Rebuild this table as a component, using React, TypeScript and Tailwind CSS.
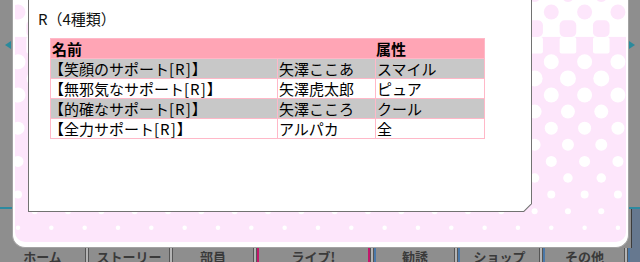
const PINK = "#fde6fb";

const rows = [
  { name: "【笑顔のサポート", chara: "矢澤ここあ", attr: "スマイル", gray: true },
  { name: "【無邪気なサポート", chara: "矢澤虎太郎", attr: "ピュア", gray: false },
  { name: "【的確なサポート", chara: "矢澤こころ", attr: "クール", gray: true },
  { name: "【全力サポート", chara: "アルパカ", attr: "全", gray: false },
];

const tabs = [
  { label: "ホーム", w: "w-[85px]" },
  { label: "ストーリー", w: "w-[80px]" },
  { label: "部員", w: "w-[80px]" },
  { label: "ライブ!", w: "w-[111px]", live: true },
  { label: "勧誘", w: "w-[78px]" },
  { label: "ショップ", w: "w-[79px]" },
  { label: "その他", w: "w-[79px]" },
];

// halftone dots behind the panel (coords are page pixels, see viewBox)
const DotPattern = () => {
  const row = (k: number) => 12 + 16.6 * k;
  const cols = (onA: boolean) =>
    Array.from({ length: 20 }, (_, n) => (onA ? 18 : 1.33) + n * 33.33);
  const whiteSize: Record<number, number> = {
    3: 15, 4: 16, 5: 15, 6: 14, 7: 13, 8: 12, 9: 11, 10: 9.5, 11: 8, 12: 6, 13: 4.5,
  };

  return (
    <svg
      className="absolute inset-0"
      width={611}
      height={242}
      viewBox="15 0 611 242"
    >
      <rect x={0} y={0} width={640} height={242} fill="#ffffff" />
      {cols(false).map((x) => (
        <circle key={`a${x}`} cx={x} cy={row(-1)} r={6.5} fill={PINK} />
      ))}
      {cols(true).map((x) => (
        <circle key={`b${x}`} cx={x} cy={row(0)} r={7.5} fill={PINK} />
      ))}
      {cols(false).map((x) => (
        <rect key={`c${x}`} x={x - 8.3} y={row(1) - 8.3} width={16.6} height={16.6} rx={5} fill={PINK} />
      ))}
      <rect x={0} y={row(1.5)} width={640} height={242} fill={PINK} />
      {cols(false).map((x) => (
        <rect key={`d${x}`} x={x - 8.3} y={row(1.5)} width={16.6} height={16.6} rx={2} fill="#ffffff" />
      ))}
      {Object.entries(whiteSize).map(([ks, d]) => {
        const k = Number(ks);
        return cols(k % 2 === 1).map((x) => (
          <circle key={`w${k}-${x}`} cx={x} cy={row(k)} r={d / 2} fill="#ffffff" />
        ));
      })}
    </svg>
  );
};

const Arrow = ({ dir }: { dir: "left" | "right" }) => (
  <svg width="6" height="8" viewBox="0 0 6 8">
    {dir === "left" ? (
      <polygon points="6,0 0,4 6,8" fill="#2a8a9c" />
    ) : (
      <polygon points="0,0 6,4 0,8" fill="#2a8a9c" />
    )}
  </svg>
);

const Separator = ({ accent }: { accent?: "left" | "right" | "blue" }) => (
  <div className="flex h-full">
    <div className="w-px bg-[#555]" />
    <div className="w-[2px] bg-[#b4b4b4]" />
    <div className="w-px bg-[#555]" />
    {accent === "left" && <div className="w-[2px] bg-[#c2186b]" />}
    {accent === "right" && <div className="w-[2px] bg-[#999]" />}
    {accent === "blue" && <div className="w-[2px] bg-[#4a78a8]" />}
  </div>
);

const App = () => {
  return (
    <div
      className="w-[640px] h-[262px] overflow-hidden bg-[#8e8e8e] flex flex-col"
      style={{ fontFamily: '"Noto Sans CJK JP", "Noto Sans", sans-serif' }}
    >
      <div className="flex h-[248px] shrink-0">
        {/* left side strip */}
        <div className="w-[12px] flex flex-col">
          <div className="h-[41px]" />
          <div className="pl-[5px]">
            <Arrow dir="left" />
          </div>
          <div className="flex-1" />
          <div className="h-[2px] bg-[#2d8aa0] mb-[39px]" />
        </div>

        {/* pink frame */}
        <div className="w-[617px] border-x border-b border-[#a3a3a3] rounded-b-[13px] bg-white px-[2px] pb-[5px]">
          <div className="relative h-full rounded-b-[10px] overflow-hidden">
            <DotPattern />
            <div className="relative ml-[13px] w-[504px] h-[212px] bg-[#727272] px-px pb-px [clip-path:polygon(0_0,100%_0,100%_calc(100%_-_8px),calc(100%_-_8px)_100%,0_100%)]">
              <div className="h-full bg-white pl-[9px] pt-[10px] [clip-path:polygon(0_0,100%_0,100%_calc(100%_-_7.5px),calc(100%_-_7.5px)_100%,0_100%)]">
                <div className="text-[15px] leading-[18px] text-[#111]">R（4種類）</div>

                <div className="ml-[12px] mt-[10px] w-[435px] border border-[#ffb8c8] text-[15px] leading-[19px] text-black">
                  <div className="grid grid-cols-[226px_98px_1fr] h-[19px] bg-[#ffa5b5] font-bold">
                    <div className="pl-px">名前</div>
                    <div />
                    <div className="pl-px">属性</div>
                  </div>
                  {rows.map((r) => (
                    <div
                      key={r.name}
                      className={`grid grid-cols-[226px_98px_1fr] h-[20px] border-t border-[#ffb8c8] ${
                        r.gray ? "bg-[#c8c8c8]" : "bg-white"
                      }`}
                    >
                      <div className="whitespace-nowrap">
                        <span className="-ml-[2px]">【</span>
                        {r.name.slice(1)}
                        <span className="tracking-[1px]">[R]</span>】
                      </div>
                      <div className="border-l border-[#ffb8c8] pl-px whitespace-nowrap">{r.chara}</div>
                      <div className="border-l border-[#ffb8c8] pl-px whitespace-nowrap">{r.attr}</div>
                    </div>
                  ))}
                </div>
              </div>
            </div>
          </div>
        </div>

        {/* right side strip */}
        <div className="w-[11px] flex flex-col">
          <div className="h-[41px]" />
          <div className="pl-0">
            <Arrow dir="right" />
          </div>
          <div className="flex-1" />
          <div className="h-[2px] bg-[#2d8aa0]" />
          <div className="h-[39px] flex">
            <div className="w-[2px]" />
            <div className="w-px bg-[#3c3c3c]" />
            <div className="flex-1 bg-[#66788f]" />
          </div>
        </div>
      </div>

      {/* bottom tab bar, mostly hidden below the window */}
      <div className="flex h-[20px] shrink-0 text-[13px] font-bold leading-[16px] text-[#3a3a3a]">
        {tabs.map((t, i) => (
          <div key={t.label} className="flex h-full">
            {i > 0 && (
              <Separator
                accent={t.live ? "left" : i >= 4 ? "blue" : undefined}
              />
            )}
            <div
              className={`${t.w} h-full flex justify-center pt-px ${
                t.live ? "border-r-2 border-[#c2186b]" : ""
              }`}
            >
              {t.label}
            </div>
          </div>
        ))}
        <Separator accent="blue" />
        <div className="flex-1 bg-[#66788f]" />
      </div>
    </div>
  );
};

export default App;
